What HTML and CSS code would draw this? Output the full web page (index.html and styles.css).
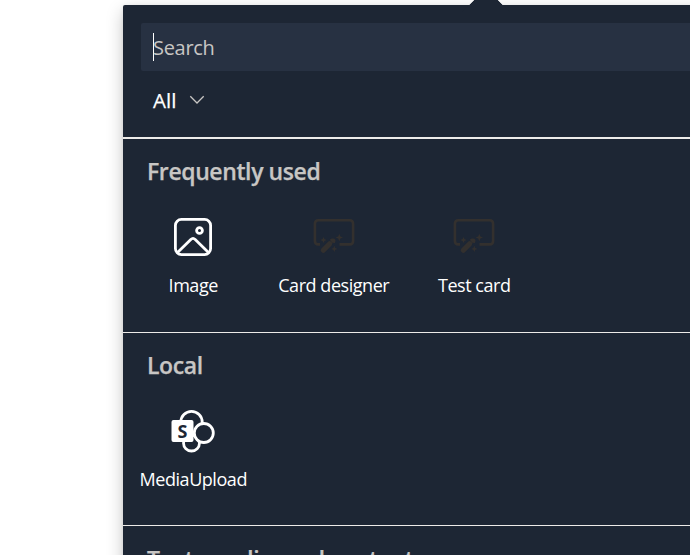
FILE: index.html
```html
<!DOCTYPE html>
<html lang="en">
<head>
<meta charset="utf-8">
<title>Web part toolbox</title>
<link rel="stylesheet" href="styles.css">
</head>
<body>
<svg class="defs" width="0" height="0" aria-hidden="true">
  <symbol id="card" viewBox="0 0 44 44">
    <path d="M8 29.400H6.400Q2.900 29.400 2.900 25.900V8.700Q2.900 5.200 6.400 5.200H37.600Q41.100 5.200 41.100 8.700V25.900Q41.100 29.400 37.600 29.400H27.500" fill="none" stroke="currentColor" stroke-width="2.600"/>
    <path d="M11.300 35.200L17.700 28.700" stroke="currentColor" stroke-width="5.200" stroke-linecap="round"/>
    <path d="M17.800 24.800L20.300 27.700L23 27.900Q24.500 24.100 21.500 23.600Q19.300 23.200 17.800 24.800ZM11.500 22L12.400 24.100L14.500 25L12.400 25.900L11.500 28L10.600 25.900L8.500 25L10.600 24.100ZM27.300 18.800L28.400 21.400L31 22.500L28.400 23.600L27.300 26.200L26.200 23.600L23.600 22.500L26.200 21.400ZM22.300 30.800L23.200 33L25.400 33.900L23.200 34.800L22.300 37L21.400 34.800L19.200 33.900L21.400 33Z" fill="currentColor"/>
  </symbol>
</svg>
<main class="panel">
  <span class="beak"></span>
  <header class="top">
    <div class="search"><span class="caret"></span><span class="placeholder">Search</span></div>
    <div class="filter"><span class="filter-label">All</span>
      <svg width="16" height="10" viewBox="0 0 16 10"><path d="M1.300 1.300L8 8L14.700 1.300" fill="none" stroke="currentColor" stroke-width="1.300"/></svg>
    </div>
  </header>
  <section class="group">
    <h2>Frequently used</h2>
    <div class="items">
      <div class="item">
        <svg class="icon" viewBox="0 0 44 44"><g fill="none" stroke="currentColor" stroke-width="2.800"><rect x="4.400" y="4.400" width="35.200" height="35.200" rx="6"/><circle cx="28.500" cy="15.500" r="2.900"/><path d="M6 38L19.800 24.400Q22 22.300 24.200 24.400L38 38"/></g></svg>
        <span class="label">Image</span>
      </div>
      <div class="item">
        <svg class="icon muted"><use href="#card"/></svg>
        <span class="label">Card designer</span>
      </div>
      <div class="item">
        <svg class="icon muted"><use href="#card"/></svg>
        <span class="label">Test card</span>
      </div>
    </div>
  </section>
  <section class="group">
    <h2>Local</h2>
    <div class="items">
      <div class="item">
        <svg class="icon" viewBox="0 0 44 44"><g fill="none" stroke="currentColor" stroke-width="2.800"><circle cx="20.500" cy="13" r="10.700"/><circle class="cover" cx="20.500" cy="34" r="8"/><circle class="cover" cx="32.800" cy="24" r="9.500"/></g><rect x=".5" y="11" width="22" height="22" rx="2" fill="currentColor"/><text class="letter" x="11.500" y="28.500" text-anchor="middle">S</text></svg>
        <span class="label">MediaUpload</span>
      </div>
    </div>
  </section>
  <section class="group last">
    <h2>Text, media, and content</h2>
  </section>
</main>
</body>
</html>
```
FILE: styles.css
```css
* { box-sizing: border-box; }
html { height: 100%; overflow: hidden; }
body { height: 555px; margin: 0; padding: 5px 0 0 123px; overflow: hidden; background: #fff; font-family: "Open Sans", "Noto Sans", sans-serif; }
.defs { position: absolute; }
.panel { position: relative; width: 720px; height: 620px; background: #1d2634; color: #fff; border-radius: 2px; box-shadow: 0 6px 17px rgba(0, 0, 0, .22), 0 1px 4px rgba(0, 0, 0, .08); }
.beak { position: absolute; left: 346px; top: -10px; width: 34px; height: 34px; background: #1d2634; transform: rotate(45deg); clip-path: polygon(0 0, 100% 0, 0 100%); }
.top { height: 134px; padding: 18px 0 0 18px; border-bottom: 2px solid #edebe9; }
.search { display: flex; align-items: center; height: 48px; padding-left: 12px; background: #273142; border-radius: 2px; font-size: 20px; letter-spacing: -.3px; color: #c8c6c4; }
.caret { width: 1px; height: 28px; background: #fff; }
.placeholder { margin-left: -1px; margin-top: 1px; }
.filter { display: flex; align-items: center; gap: 13px; height: 57px; padding-left: 12px; font-size: 20.500px; color: #c8c6c4; }
.filter-label { color: #fff; -webkit-text-stroke: .25px currentColor; }
.group { height: 193.500px; padding-top: 16px; border-bottom: 1px solid #edebe9; }
h2 { height: 32px; margin: 0 0 0 24px; font-size: 23px; line-height: 32px; font-weight: 600; letter-spacing: -.4px; -webkit-text-stroke: .25px currentColor; color: #c8c6c4; white-space: nowrap; }
.last h2 { margin-top: 1px; }
.items { display: flex; padding-top: 28px; }
.item { display: flex; flex-direction: column; align-items: center; width: 140.500px; }
.icon { width: 44px; height: 44px; }
.muted { color: #33302e; }
.label { margin-top: 14px; font-size: 18px; line-height: 24px; letter-spacing: -.45px; white-space: nowrap; }
.cover { fill: #1d2634; }
.letter { font-size: 18px; font-weight: 700; fill: #1d2634; }
```
